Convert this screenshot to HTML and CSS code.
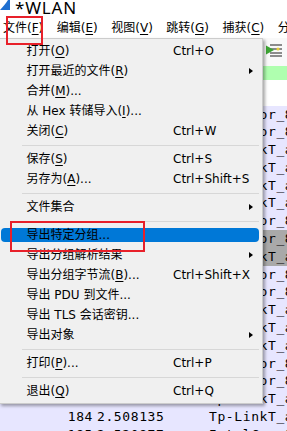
FILE: index.html
```html
<!DOCTYPE html>
<html lang="zh-CN">
<head>
  <meta charset="UTF-8" />
  <title>*WLAN</title>
  <link rel="stylesheet" href="styles.css">
</head>
<body>
  <div class="window">
    <div class="titlebar">
      <svg class="app-icon" width="10" height="12" viewBox="0 0 10 12">
        <path d="M0 10 C3 7 6 3 8 0 L10 0 L10 10 Z" fill="#1f6fd0"/>
      </svg>
      <span class="title">*WLAN</span>
    </div>

    <div class="menubar">
      <span>文件(<u>F</u>)</span>
      <span>编辑(<u>E</u>)</span>
      <span>视图(<u>V</u>)</span>
      <span>跳转(<u>G</u>)</span>
      <span>捕获(<u>C</u>)</span>
      <span>分析(<u>A</u>)</span>
    </div>

    <!-- main toolbar, most buttons are under the open menu -->
    <div class="toolbar">
      <svg class="tool-icon" width="16" height="14" viewBox="0 0 16 14">
        <rect x="4" y="1" width="12" height="2" fill="#8c8c8c"/>
        <rect x="4" y="5" width="12" height="2" fill="#8c8c8c"/>
        <rect x="4" y="9" width="12" height="2" fill="#8c8c8c"/>
        <rect x="4" y="12" width="12" height="2" fill="#8c8c8c"/>
        <path d="M0 2.5 L8 7 L0 11.5 Z" fill="#3da534"/>
        <circle cx="12" cy="6" r="1.6" fill="#e6cf3a"/>
      </svg>
    </div>

    <div class="filterbar"></div>
    <div class="list-header"></div>

    <div class="packets">
      <div class="row"><span class="no">166</span><span class="time">2.301544</span><span class="src">IntelCor_8c:4e:21</span></div>
      <div class="row"><span class="no">167</span><span class="time">2.302017</span><span class="src">IntelCor_8c:4e:21</span></div>
      <div class="row"><span class="no">168</span><span class="time">2.318230</span><span class="src">Tp-LinkT_a6:10:3c</span></div>
      <div class="row"><span class="no">169</span><span class="time">2.318411</span><span class="src">Tp-LinkT_a6:10:3c</span></div>
      <div class="row"><span class="no">170</span><span class="time">2.335902</span><span class="src">Tp-LinkT_a6:10:3c</span></div>
      <div class="row"><span class="no">171</span><span class="time">2.336120</span><span class="src">Tp-LinkT_a6:10:3c</span></div>
      <div class="row"><span class="no">172</span><span class="time">2.352877</span><span class="src">IntelCor_8c:4e:21</span></div>
      <div class="row selected"><span class="no">173</span><span class="time">2.370415</span><span class="src">IntelCor_8c:4e:21</span></div>
      <div class="row selected"><span class="no">174</span><span class="time">2.389063</span><span class="src">Tp-LinkT_a6:10:3c</span></div>
      <div class="row"><span class="no">175</span><span class="time">2.402398</span><span class="src">IntelCor_8c:4e:21</span></div>
      <div class="row"><span class="no">176</span><span class="time">2.419920</span><span class="src">IntelCor_8c:4e:21</span></div>
      <div class="row"><span class="no">177</span><span class="time">2.431776</span><span class="src">Tp-LinkT_a6:10:3c</span></div>
      <div class="row"><span class="no">178</span><span class="time">2.447350</span><span class="src">Tp-LinkT_a6:10:3c</span></div>
      <div class="row"><span class="no">179</span><span class="time">2.460018</span><span class="src">Tp-LinkT_a6:10:3c</span></div>
      <div class="row"><span class="no">180</span><span class="time">2.472664</span><span class="src">IntelCor_8c:4e:21</span></div>
      <div class="row"><span class="no">181</span><span class="time">2.480193</span><span class="src">IntelCor_8c:4e:21</span></div>
      <div class="row"><span class="no">183</span><span class="time">2.491457</span><span class="src">Tp-LinkT_a6:10:3c</span></div>
      <div class="row"><span class="no">184</span><span class="time">2.508135</span><span class="src">Tp-LinkT_a6:10:3c</span></div>
      <div class="row"><span class="no">185</span><span class="time">2.520877</span><span class="src">IntelCor_8c:4e:21</span></div>
    </div>
  </div>

  <!-- File menu (open) -->
  <div class="menu">
    <div class="item"><span class="label">打开(<u>O</u>)</span><span class="key">Ctrl+O</span></div>
    <div class="item"><span class="label">打开最近的文件(<u>R</u>)</span><span class="arrow"></span></div>
    <div class="item"><span class="label">合并(<u>M</u>)...</span></div>
    <div class="item"><span class="label">从 Hex 转储导入(<u>I</u>)...</span></div>
    <div class="item"><span class="label">关闭(<u>C</u>)</span><span class="key">Ctrl+W</span></div>
    <div class="sep"></div>
    <div class="item"><span class="label">保存(<u>S</u>)</span><span class="key">Ctrl+S</span></div>
    <div class="item"><span class="label">另存为(<u>A</u>)...</span><span class="key">Ctrl+Shift+S</span></div>
    <div class="sep"></div>
    <div class="item"><span class="label">文件集合</span><span class="arrow"></span></div>
    <div class="sep"></div>
    <div class="item active"><span class="label">导出特定分组...</span></div>
    <div class="item"><span class="label">导出分组解析结果</span><span class="arrow"></span></div>
    <div class="item"><span class="label">导出分组字节流(<u>B</u>)...</span><span class="key">Ctrl+Shift+X</span></div>
    <div class="item"><span class="label">导出 PDU 到文件...</span></div>
    <div class="item"><span class="label">导出 TLS 会话密钥...</span></div>
    <div class="item"><span class="label">导出对象</span><span class="arrow"></span></div>
    <div class="sep"></div>
    <div class="item"><span class="label">打印(<u>P</u>)...</span><span class="key">Ctrl+P</span></div>
    <div class="sep"></div>
    <div class="item"><span class="label">退出(<u>Q</u>)</span><span class="key">Ctrl+Q</span></div>
  </div>

  <!-- red annotation boxes -->
  <div class="mark mark-file"></div>
  <div class="mark mark-export"></div>
</body>
</html>
```

FILE: styles.css
```css
:root {
  --menu-bg: #f0f0f0;
  --menu-border: #cccccc;
  --highlight: #0078d7;
  --row-tcp: #e7e6ff;
  --row-selected: #a9a9a9;
  --filter-ok: #afffaf;
  --mark-red: #e8202a;
}

* {
  box-sizing: border-box;
}

body {
  margin: 0;
  width: 287px;
  height: 431px;
  overflow: hidden;
  position: relative;
  background: #fff;
  color: #000;
  font-family: "DejaVu Sans", "Noto Sans CJK SC", sans-serif;
  font-size: 12px;
}

u {
  text-decoration-thickness: 1px;
  text-underline-offset: 2px;
}

/* window chrome */
.titlebar {
  height: 18px;
  display: flex;
  align-items: flex-start;
  gap: 5px;
  background: #fff;
}

.app-icon {
  display: block;
}

.title {
  font-family: "Noto Sans", sans-serif;
  font-size: 17px;
  line-height: 15px;
  letter-spacing: 0.8px;
}

.menubar {
  height: 20px;
  display: flex;
  gap: 13.5px;
  padding-left: 3px;
  line-height: 20px;
  white-space: nowrap;
  background: #fff;
}

.toolbar {
  height: 28px;
  display: flex;
  align-items: flex-start;
  padding-left: 266px;
  padding-top: 5px;
  background: #f9f9f9;
}

.tool-icon {
  display: block;
}

.filterbar {
  height: 14px;
  background: var(--filter-ok);
}

.list-header {
  height: 25.5px;
  background: #fff;
}

/* packet list */
.packets {
  font-family: "DejaVu Sans Mono", monospace;
  font-size: 13px;
  letter-spacing: 0.6px;
}

.row {
  height: 17.8px;
  line-height: 17.8px;
  display: grid;
  grid-template-columns: 93px 116px auto;
  background: var(--row-tcp);
  white-space: nowrap;
  overflow: hidden;
}

.row.selected {
  background: var(--row-selected);
}

.row .no {
  text-align: right;
}

.row .time {
  padding-left: 4px;
}

/* file menu */
.menu {
  position: absolute;
  top: 38px;
  left: -1px;
  width: 264px;
  padding: 2px 0 2px;
  background: var(--menu-bg);
  border: 1px solid var(--menu-border);
  box-shadow: 2px 2px 3px rgba(0, 0, 0, 0.35);
}

.item {
  position: relative;
  height: 20px;
  line-height: 20px;
  display: flex;
  align-items: center;
  padding-left: 26.5px;
  white-space: nowrap;
}

.item > span {
  position: relative;
}

.item .label {
  flex: none;
  width: 146.5px;
}

.item .key {
  flex: none;
}

.item .arrow {
  margin-left: auto;
  margin-right: 9px;
  width: 0;
  height: 0;
  border-left: 4px solid #000;
  border-top: 3.5px solid transparent;
  border-bottom: 3.5px solid transparent;
}

.item.active::before {
  content: "";
  position: absolute;
  left: 1px;
  right: 3px;
  top: 3px;
  height: 14px;
  border-radius: 4px;
  background: var(--highlight);
}

.sep {
  height: 1px;
  margin: 4px 3px 3px 22px;
  background: #d7d7d7;
}

/* annotation */
.mark {
  position: absolute;
  border: 2px solid var(--mark-red);
}

.mark-file {
  left: 6px;
  top: 16px;
  width: 37px;
  height: 29px;
}

.mark-export {
  left: 10px;
  top: 221px;
  width: 135px;
  height: 31px;
}
```
